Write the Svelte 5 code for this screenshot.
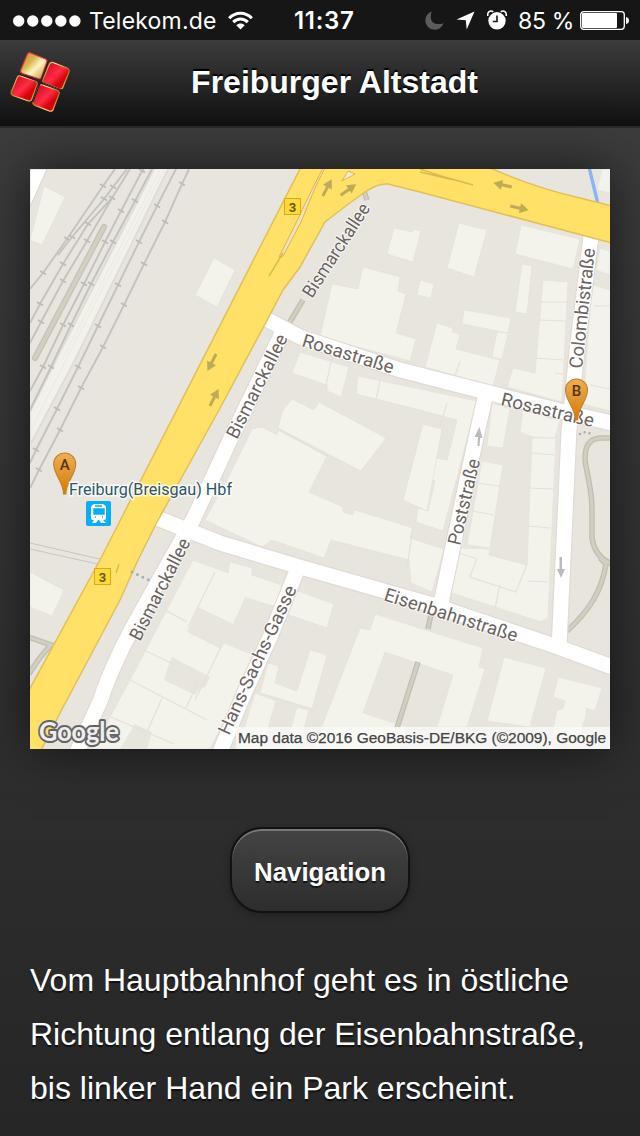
<script>
  const buildings = [
    '44,186 65,197 42,245 30,240', '214,258 235,270 217,307 195,295',
    '394,228 412,232 413,229 421,231 413,262 387,254',
    '363,267 400,277 398,291 406,294 396,333 416,339 410,361 320,337 332,284 358,289',
    '459,223 487,230 474,277 447,268', '521,225 580,239 573,269 515,254',
    '420,280 434,284 431,298 417,295', '522,264 532,266 527,314 515,312',
    '464,310 511,318 508,333 462,324', '497,332 508,333 502,359 492,357',
    '437,323 453,328 452,332 460,334 456,349 500,360 493,386 425,367',
    '543,280 568,282 562,402 507,387 513,368 535,373',
    '600,248 610,251 610,275 596,270', '592,285 610,290 610,411 583,404',
    '602,169 610,169 610,193 597,190',
    '300,352 349,367 341,397 327,391 327,385 292,373',
    '358,376 477,401 443,531 416,522 418,508 428,511 435,481 430,480 436,458 447,460 457,420 420,410 356,394',
    '423,424 442,429 427,511 403,500',
    '292,399 314,410 319,402 386,438 361,471 278,428 283,410',
    '252,429 262,427 277,435 278,430 327,456 309,492 343,507 343,512 353,515 355,510 413,528 410,538 444,549 432,592 411,583 409,560 331,540 324,558 272,540 262,547 205,520 228,478',
    '492,403 510,409 503,448 487,446', '482,461 503,465 490,548 467,545',
    '523,410 560,421 555,438 533,437 520,432',
    '532,438 556,438 548,618 541,622 449,592 457,548 490,549 489,555 527,565',
    '30,572 64,590 52,616 30,607',
    '193,560 228,573 230,562 252,568 252,575 290,588 283,606 210,749 92,749 110,717 130,680',
    '295,590 334,604 327,628 286,614',
    '268,663 279,666 275,683 297,691 310,650 327,655 312,709 260,693',
    '255,693 276,701 262,749 238,749', '297,707 309,710 299,749 285,749',
    '375,614 483,648 479,667 485,669 467,727 437,727 453,675 420,664 385,652 363,713 407,727 400,749 313,749 360,628 370,630',
    '504,657 546,668 530,727 487,721',
    '558,677 602,688 595,711 586,708 586,715 580,735 552,735 557,710 563,709 565,701 553,697'
  ];
  const yards = [
    '198,607 233,624 245,597 278,607 252,655 223,643 221,649 187,632',
    '172,657 210,677 205,688 201,687 195,695 164,680 167,670',
    '135,724 152,732 147,749 120,749'
  ];
  const dividers = 'M540 302H567M539 320L565 321M536 358L563 360M477 483L500 486M472 511L494 515M532 453L554 455M529 488L553 489M527 526L551 528M278 429L327 456M331 361L326 386M380 381L376 399M447 403L440 426M215 572L188 627M165 610L187 622M144 650L171 663M130 680L207 720M162 698L143 741M198 682L186 708M111 717L174 744M223 643L195 700M477 558L470 577L516 592L527 564M500 585L495 608M527 581L547 582M555 373L563 374M590 385L610 389M594 306H610M445 549L475 558M312 709L263 694M413 528L407 567M460 361L455 376';
  const tracks = [
    [[115,169],[103,186],[67,239],[43,273],[30,289]],
    [[127,169],[113,187],[104,199],[72,237],[58,255]],
    [[130,169],[112,198],[88,224],[63,264],[40,304],[30,323]],
    [[112,198],[87,241],[63,281],[41,322],[30,343]],
    [[148,163],[142,171],[121,211],[105,242],[84,284],[63,325],[43,367],[30,391]],
    [[152,169],[135,201],[113,242],[91,284],[71,325],[51,367],[30,410]],
    [[176,169],[157,206],[139,242],[118,285],[98,326],[78,367],[57,409],[36,450],[30,463]],
    [[189,169],[182,184],[165,222],[144,264],[124,305],[103,347],[81,388],[60,430],[39,470],[30,488]]
  ];
  const roads = [
    'M266 319L300 337L400 370L490 393L560 411L612 423',
    'M286 325L230 440L193 520L148 600C125 640 110 670 101 699L77 752',
    'M157 518L220 543L300 567L430 604L558 647L612 667',
    'M485 397L469 470L440 608',
    'M591 236L577 350L569 430L559 648',
    'M298 568L270 637L244 694L220 752'
  ];
  const labels = [
    [312, 299, -57, 108, 'Bismarckallee'], [237, 440, -63.4, 114, 'Bismarckallee'],
    [140, 642, -63, 112, 'Bismarckallee'], [301, 346, 17, 95, 'Rosastraße'],
    [500, 405, 13.5, 95, 'Rosastraße'], [460, 546, -76.8, 88, 'Poststraße'],
    [582, 369, -83.8, 121, 'Colombistraße'], [383, 600, 17.6, 139, 'Eisenbahnstraße'],
    [229, 736, -65.2, 162, 'Hans-Sachs-Gasse']
  ];
  const arrows = [
    [327,188,-62], [348,190,-35], [503,185,193], [519,208,13], [212,362,117], [214,398,-63]
  ];
  const lines = ['Vom Hauptbahnhof geht es in östliche', 'Richtung entlang der Eisenbahnstraße,', 'bis linker Hand ein Park erscheint.'];
</script>

<div class="screen">
  <div class="status">
    <div class="carrier">
      <svg width="68" height="12" viewBox="0 0 68 12" fill="#fff">
        {#each [0, 1, 2, 3, 4] as i}<circle cx={5.7 + i * 14.05} cy="6" r="5.7" />{/each}
      </svg>
      <span class="name">Telekom.de</span>
      <svg class="wifi" width="25" height="19" viewBox="0 0 25 19" fill="none" stroke="#fff" stroke-width="3.1">
        <path d="M1.2 7.2C7.4 .5 17.6 .5 23.8 7.2" /><path d="M5.2 11.2C9.4 7 15.6 7 19.8 11.2" />
        <path d="M8.3 14.2C10.5 11.8 14.5 11.8 16.7 14.2L12.5 18.5Z" fill="#fff" stroke="none" />
      </svg>
    </div>
    <span class="clock">11:37</span>
    <div class="indicators">
      <svg width="19" height="19" viewBox="0 0 19 19"><path d="M6.8 .5C3.2 10 9.3 15.4 18.5 12.2A9.3 9.3 0 1 1 6.8 .5Z" fill="#5c5c5c" /></svg>
      <svg class="locate" width="19" height="19" viewBox="0 0 19 19"><path d="M18.5 .5L10.7 18.5L9.8 9.2L.5 8.4Z" fill="#fff" /></svg>
      <svg class="alarm" width="20" height="20" viewBox="0 0 20 20">
        <path d="M.8 6C.2 2 3 0 6.3 1.7M13.7 1.7C17 0 19.8 2 19.2 6" fill="none" stroke="#fff" stroke-width="1.6" />
        <circle cx="10" cy="10.8" r="8.7" fill="#fff" /><path d="M10 5.5V11.5H5.8" fill="none" stroke="#161616" stroke-width="1.6" />
      </svg>
      <span class="percent">85 %</span>
      <svg width="49" height="19" viewBox="0 0 49 19">
        <rect x=".7" y=".7" width="43.6" height="17.6" rx="3" fill="none" stroke="#fff" stroke-width="1.3" />
        <rect x="2" y="2" width="35" height="15" rx="1" fill="#fff" /><path d="M46 6Q49 6.5 49 9.5T46 13Z" fill="#fff" />
      </svg>
    </div>
  </div>

  <header>
    <svg class="logo" width="60" height="60" viewBox="0 0 60 60">
      <defs>
        <linearGradient id="gold" x1="0" y1="0" x2="1" y2="1"><stop offset="0" stop-color="#c99035" /><stop offset=".35" stop-color="#d8b24d" /><stop offset=".58" stop-color="#fff6bf" /><stop offset="1" stop-color="#bd8629" /></linearGradient>
        <linearGradient id="red" x1="0" y1="0" x2="1" y2="1"><stop offset="0" stop-color="#c90012" /><stop offset=".48" stop-color="#ff2d46" /><stop offset=".7" stop-color="#d70007" /><stop offset="1" stop-color="#d60b0b" /></linearGradient>
        <linearGradient id="rim"><stop offset="0" stop-color="#b48522" /><stop offset=".5" stop-color="#ffe79a" /><stop offset="1" stop-color="#b87518" /></linearGradient>
      </defs>
      <g stroke-width="1.2" stroke-linejoin="round">
        <path d="M20 .8L35.5 7Q37.400 8 36.800 10L31.600 24.500Q31 27.500 28 26.500L12.500 21.500Q10 20.500 10.800 18L17 3Q18 .3 20 .8Z" fill="url(#gold)" stroke="#dc3546" />
        <path d="M43 10.500L57 16Q60 17.400 59 20L53 35Q52 38 49 36.800L34.500 31.400Q32 30 33 27.500L39 13Q40 10 43 10.500Z" fill="url(#red)" stroke="url(#rim)" />
        <path d="M10.500 24L25.500 29Q28 30 27 32.500L22 46.500Q21 50 18 48.700L4 44Q.2 42.500 1.200 40L7 26Q8 23 10.500 24Z" fill="url(#red)" stroke="url(#rim)" />
        <path d="M32.500 33L46.500 38Q50 39 49 42L43.500 56.500Q42.800 59.500 40 59.200L25.500 53.600Q22 52 23.200 49.800L28.600 35Q29.600 32 32.500 33Z" fill="url(#red)" stroke="url(#rim)" />
      </g>
      <path d="M38.500 9L23 50M9 22L52 38" stroke="#361d20" stroke-width="1.300" />
    </svg>
    <h1>Freiburger Altstadt</h1>
  </header>

  <main>
    <svg class="map" width="580" height="580" viewBox="30 169 580 580">
      <defs>
        <linearGradient id="pin" x1="0" y1="0" x2="0" y2="1"><stop offset="0" stop-color="#f0b050" /><stop offset=".5" stop-color="#dd952f" /><stop offset="1" stop-color="#df7800" /></linearGradient>
      </defs>
      <rect x="30" y="169" width="580" height="580" fill="#e8e4de" />
      <path d="M30 169H47L30 207Z" fill="#fff" stroke="#d8d4cb" />
      <path d="M155 167H169L75 360L30 445V412L55 362Z" fill="#f2f2eb" stroke="#e0ddd7" stroke-width="2" />
      <path d="M164 170L67 358L31 430M160 170L62 360" stroke="#ebe9e2" fill="none" />
      {#each buildings as points}<polygon {points} fill="#f3f3ec" stroke="#e5e2da" stroke-width=".8" />{/each}
      {#each yards as points}<polygon {points} fill="#e8e4de" />{/each}
      <path d={dividers} fill="none" stroke="#e3e1d8" stroke-width="1.2" />
      {#each tracks as t}
        <polyline points={t.map((p) => p.join(',')).join(' ')} fill="none" stroke="#c4c2c0" stroke-width="1.9" />
        {#each t.slice(1, -1) as [x, y]}<path d="M{x - 3} {y - 2}L{x + 3} {y + 1.5}" stroke="#bbb" stroke-width="1.5" />{/each}
      {/each}
      <path d="M104 227L35 358" stroke="#c4c2b5" stroke-width="6" stroke-linecap="round" />
      <path d="M104 227L35 358" stroke="#d2d0c3" stroke-width="3.5" stroke-linecap="round" />
      <g fill="none" stroke="#bfbeb0" stroke-width="5.5">
        <path d="M612 438H600C588 439 585 447 585 460C588 480 592 490 592 510V538C594 552 602 560 612 564M600 558L606 564C602 590 590 610 567 631" />
        <path d="M364 191L367 200M303 300L288 325M418 662L397 728M434 600L428 629M28 637L51 645Q40 656 29 674" />
      </g>
      <g fill="none" stroke="#d0cfc1" stroke-width="3">
        <path d="M612 438H600C588 439 585 447 585 460C588 480 592 490 592 510V538C594 552 602 560 612 564M600 558L606 564C602 590 590 610 567 631" />
        <path d="M364 191L367 200M303 300L288 325M418 662L397 728M434 600L428 629M28 637L51 645Q40 656 29 674" />
      </g>
      <path d="M30 543L104 560M30 549L102 565" stroke="#c8c6bd" />
      <path d="M589 167L598 204M592 281V285" stroke="#8ab4f8" stroke-width="3.4" />
      {#each roads as d}<path {d} fill="none" stroke="#dfdad2" stroke-width="17" />{/each}
      {#each roads as d}<path {d} fill="none" stroke="#fff" stroke-width="14.8" />{/each}
      <path d="M301 167L100 560L28 692V752H40L60 713L120 600L138 560L157 522L219 410L264 326L283 290L300 267L325 222Q345 206 365 192Q378 183 388 184L420 192L612 243V206L580 198Q535 188 488 167Z" fill="#ffe168" stroke="#e3bf57" stroke-width="1.5" />
      <path d="M323 168C312 189 304 206 297 221L279 257L283 256L301 222C309 203 315 186 325 168Z" fill="#eee2c5" stroke="#dfb344" />
      <path d="M283 253L269 276" stroke="#dab340" stroke-width="1.4" />
      <path d="M348 171L355 174L342 181Z" fill="#f0e9dc" stroke="#ddb651" />
      <path d="M420 169L441 176L473 185M420 172L454 180M119 564L116 573" fill="none" stroke="#e0b650" stroke-width="1.4" />
      {#each arrows as [x, y, a]}<g transform="translate({x} {y}) rotate({a})"><path d="M-9-1.5H1V-5L10 0L1 5V1.5H-9Z" fill="#bdab57" /></g>{/each}
      <path d="M477.500 446L478 437H474.500L479.500 427L482.500 438H480L479.500 446ZM559.500 557H562V569H565L561 578L557 569H559.500Z" fill="#bbb" />
      <path d="M132 572L151 581" stroke="#b0adab" stroke-width="3" stroke-linecap="round" stroke-dasharray="0 6" />
      <path d="M580 434L585 432L592 434" fill="none" stroke="#b0adab" stroke-width="2.5" stroke-linecap="round" stroke-dasharray="0 5" />
      <g class="route">
        <rect x="284.500" y="198.500" width="16" height="16" /><text x="292.500" y="211.500">3</text>
        <rect x="94.500" y="568.500" width="16" height="16" /><text x="102.500" y="581.500">3</text>
      </g>
      {#each labels as [x, y, angle, length, name]}
        <text class="street" transform="translate({x} {y}) rotate({angle})" textLength={length} lengthAdjust="spacingAndGlyphs">{name}</text>
      {/each}
      <rect x="86" y="501" width="25" height="25" rx="2" fill="#06adf8" />
      <g fill="#fff"><path d="M94 504H103Q106 505 106 508V518Q106 520 104 520H93Q91 520 91 518V508Q91 505 94 504Z" /><path d="M94 520H98L96 523H92ZM99 520H103L106 523H101Z" /></g>
      <path d="M95 506H102M94 509H104V514H94ZM95 517H96M102 517H103" fill="#06adf8" stroke="#06adf8" stroke-width="1.5" />
      {#each [[64.7, 464, 'A'], [576.5, 390, 'B']] as [x, y, letter]}
        <g transform="translate({x} {y})">
          <path d="M-1.200 30C-1 18-11 11-11 0A11 11 0 0 1 11 0C11 11 1 18 1.200 30Z" fill="url(#pin)" stroke="#c1802c" stroke-width="1.1" />
          <text class="pin-letter" y="6">{letter}</text>
        </g>
      {/each}
      <text class="station" x="69" y="495" textLength="163" lengthAdjust="spacingAndGlyphs">Freiburg(Breisgau) Hbf</text>
      <text class="google" x="39" y="741" textLength="80" lengthAdjust="spacingAndGlyphs">Google</text>
      <rect x="236" y="727" width="374" height="22" fill="#f8f8f6" fill-opacity=".86" />
      <text class="copyright" x="238" y="743" textLength="368" lengthAdjust="spacingAndGlyphs">Map data ©2016 GeoBasis-DE/BKG (©2009), Google</text>
    </svg>

    <button>Navigation</button>
    <p>{#each lines as line}<span>{line}</span>{/each}</p>
  </main>
</div>

<style>
  :global(body) { margin: 0; background: #262626; }
  .screen { width: 640px; height: 1136px; overflow: hidden; display: flex; flex-direction: column; color: #fff; font-family: "Liberation Sans", Arial, sans-serif; }
  .status { height: 40px; flex: none; display: grid; grid-template-columns: 294px 62px 1fr; align-items: center; background: #161616; font-family: Inter, sans-serif; font-size: 23px; line-height: 40px; white-space: nowrap; }
  .carrier { display: flex; align-items: center; padding-left: 13px; }
  .name { width: 128px; margin: 1px 11px 0 8px; letter-spacing: .2px; }
  .wifi { margin-top: -1px; }
  .clock { font-weight: 600; font-size: 24px; letter-spacing: .7px; margin-top: 1px; }
  .indicators { display: flex; align-items: center; padding-left: 69px; }
  .locate { margin-left: 12px; }
  .alarm { margin-left: 12px; margin-top: -1px; }
  .percent { width: 57px; margin: 1px 5px 0 11px; letter-spacing: -.3px; }
  .indicators svg { flex: none; }
  header { height: 86px; flex: none; display: grid; grid-template-columns: 60px 1fr 60px; align-items: center; padding: 0 10px; background: linear-gradient(#3c3c3c, #111); border-bottom: 2px solid #2a2a2a; }
  .logo { margin-top: -2px; }
  h1 { margin: -2px 0 0; padding-left: 29px; text-align: center; font-size: 32px; line-height: 40px; font-weight: 700; white-space: nowrap; text-shadow: 0 -2px 1px #000; }
  main { flex: 1; min-height: 0; display: flex; flex-direction: column; align-items: center; padding-top: 41px; background: linear-gradient(#3c3c3c, #262626); }
  .map { flex: none; box-shadow: 0 0 48px rgba(0, 0, 0, .6); }
  button { box-sizing: border-box; flex: none; width: 180px; height: 86px; margin: 78px 0 0; padding: 5px 0 0; border: 2px solid #111; border-radius: 32px; background: linear-gradient(#444, #2d2d2d); box-shadow: inset 0 2px 0 #777, 0 2px 8px rgba(0, 0, 0, .3); color: #fff; font: 700 25.800px "Liberation Sans", Arial, sans-serif; text-shadow: 0 2px 1px #111; }
  p { width: 580px; margin: 40px 0 0; font-size: 32px; line-height: 54px; text-shadow: 0 2px 1px #111; white-space: nowrap; }
  p span { display: block; }
  .street { font: 18.5px Roboto, sans-serif; fill: #6b6460; stroke: #fff; stroke-opacity: .75; stroke-width: 2px; paint-order: stroke; }
  .station { font: 16.5px Roboto, sans-serif; fill: #28586b; stroke: #fff; stroke-opacity: .8; stroke-width: 3px; paint-order: stroke; }
  .route rect { fill: #ffda34; stroke: #d4aa24; }
  .route text { font: 700 13px Roboto, sans-serif; fill: #67591c; text-anchor: middle; }
  .pin-letter { font: 500 15px Roboto, sans-serif; fill: #553411; text-anchor: middle; }
  .google { font: 700 27px Lato, sans-serif; fill: #eee; stroke: #656565; stroke-width: 4px; stroke-linejoin: round; paint-order: stroke; }
  .copyright { font: 15.5px "Liberation Sans", Arial, sans-serif; fill: #444; stroke: #444; stroke-width: .25px; }
</style>
